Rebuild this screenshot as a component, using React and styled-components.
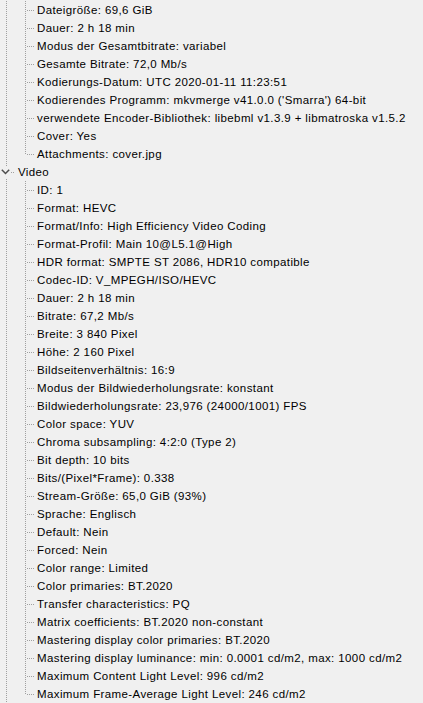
import React from 'react';
import styled, { createGlobalStyle } from 'styled-components';

const GlobalStyle = createGlobalStyle`
  html, body {
    margin: 0;
    padding: 0;
    background: #f0f0f0;
    overflow: hidden;
  }
  body {
    font-family: "Liberation Sans", Arial, sans-serif;
  }
`;

const DOT = '#a0a0a0';
const vDots = `repeating-linear-gradient(to bottom, ${DOT} 0 1px, transparent 1px 2px)`;
const hDots = `repeating-linear-gradient(to right, ${DOT} 0 1px, transparent 1px 2px)`;

const general = [
  'Dateigröße: 69,6 GiB',
  'Dauer: 2 h 18 min',
  'Modus der Gesamtbitrate: variabel',
  'Gesamte Bitrate: 72,0 Mb/s',
  'Kodierungs-Datum: UTC 2020-01-11 11:23:51',
  "Kodierendes Programm: mkvmerge v41.0.0 ('Smarra') 64-bit",
  'verwendete Encoder-Bibliothek: libebml v1.3.9 + libmatroska v1.5.2',
  'Cover: Yes',
  'Attachments: cover.jpg',
];

const video = [
  'ID: 1',
  'Format: HEVC',
  'Format/Info: High Efficiency Video Coding',
  'Format-Profil: Main 10@L5.1@High',
  'HDR format: SMPTE ST 2086, HDR10 compatible',
  'Codec-ID: V_MPEGH/ISO/HEVC',
  'Dauer: 2 h 18 min',
  'Bitrate: 67,2 Mb/s',
  'Breite: 3 840 Pixel',
  'Höhe: 2 160 Pixel',
  'Bildseitenverhältnis: 16:9',
  'Modus der Bildwiederholungsrate: konstant',
  'Bildwiederholungsrate: 23,976 (24000/1001) FPS',
  'Color space: YUV',
  'Chroma subsampling: 4:2:0 (Type 2)',
  'Bit depth: 10 bits',
  'Bits/(Pixel*Frame): 0.338',
  'Stream-Größe: 65,0 GiB (93%)',
  'Sprache: Englisch',
  'Default: Nein',
  'Forced: Nein',
  'Color range: Limited',
  'Color primaries: BT.2020',
  'Transfer characteristics: PQ',
  'Matrix coefficients: BT.2020 non-constant',
  'Mastering display color primaries: BT.2020',
  'Mastering display luminance: min: 0.0001 cd/m2, max: 1000 cd/m2',
  'Maximum Content Light Level: 996 cd/m2',
  'Maximum Frame-Average Light Level: 246 cd/m2',
];

const Tree = styled.div`
  margin-top: 1px;
  background-image: ${vDots};
  background-size: 1px 100%;
  background-position: 6px 0;
  background-repeat: no-repeat;
  min-height: 702px;
`;

const Group = styled.ul`
  list-style: none;
  margin: 0;
  padding: 0;
`;

const Row = styled.li`
  height: 18px;
  line-height: 18px;
  padding-left: 37px;
  font-size: 11.5px;
  letter-spacing: 0.39px;
  color: #000;
  white-space: nowrap;
  background-image: ${vDots}, ${hDots};
  background-size: 1px ${(p) => (p.$last ? '10px' : '18px')}, 8px 1px;
  background-position: 25px 0, 27px 9px;
  background-repeat: no-repeat;
`;

const NodeRow = styled.div`
  display: flex;
  align-items: center;
  height: 18px;
  font-size: 11.5px;
  letter-spacing: 0.39px;
  color: #000;
  background-image: ${hDots};
  background-size: 4px 1px;
  background-position: 11px 9px;
  background-repeat: no-repeat;
`;

const Toggle = styled.span`
  display: flex;
  align-items: center;
  justify-content: center;
  width: 11px;
  height: 13px;
  margin-right: 7px;
  background: #f0f0f0;
`;

const Label = styled.span`
  line-height: 18px;
`;

const Chevron = () => (
  <svg width="9" height="6" viewBox="0 0 9 6">
    <polyline points="0.8,0.8 4.5,4.5 8.2,0.8" fill="none" stroke="#4d4d4d" strokeWidth="1.5" />
  </svg>
);

const Node = ({ title, items }) => (
  <li>
    <NodeRow>
      <Toggle>
        <Chevron />
      </Toggle>
      <Label>{title}</Label>
    </NodeRow>
    <Group>
      {items.map((text, i) => (
        <Row key={text + i} $last={i === items.length - 1}>
          {text}
        </Row>
      ))}
    </Group>
  </li>
);

export default function App() {
  return (
    <>
      <GlobalStyle />
      <Tree>
        <Group>
          <li>
            <Group>
              {general.map((text, i) => (
                <Row key={text} $last={i === general.length - 1}>
                  {text}
                </Row>
              ))}
            </Group>
          </li>
          <Node title="Video" items={video} />
        </Group>
      </Tree>
    </>
  );
}
